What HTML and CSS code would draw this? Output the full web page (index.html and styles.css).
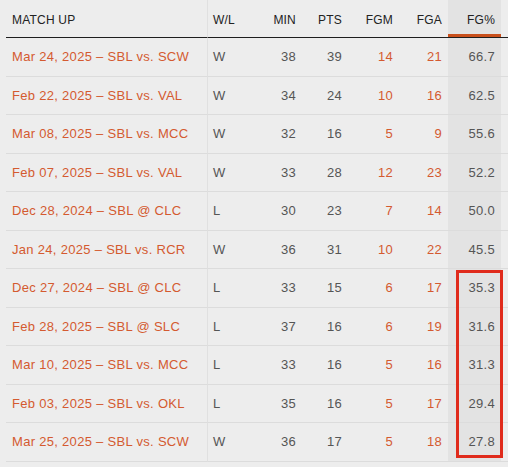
FILE: index.html
```html
<!DOCTYPE html>
<html>
<head>
<meta charset="utf-8">
<link rel="stylesheet" href="styles.css">
</head>
<body>
<div class="wrap">
<table class="stats">
<colgroup>
<col class="w-match"><col class="w-wl"><col class="w-min"><col class="w-pts"><col class="w-fgm"><col class="w-fga"><col class="w-fgp"><col class="w-pad">
</colgroup>
<thead>
<tr>
<th class="c-match">MATCH UP</th>
<th class="c-wl">W/L</th>
<th class="c-num">MIN</th>
<th class="c-num">PTS</th>
<th class="c-num">FGM</th>
<th class="c-num">FGA</th>
<th class="c-num c-fgp sorted">FG%</th>
<th class="c-pad"></th>
</tr>
</thead>
<tbody>
<tr><td class="c-match link">Mar 24, 2025 – SBL vs. SCW</td><td class="c-wl">W</td><td class="c-num">38</td><td class="c-num">39</td><td class="c-num link">14</td><td class="c-num link">21</td><td class="c-num c-fgp">66.7</td><td class="c-pad"></td></tr>
<tr><td class="c-match link">Feb 22, 2025 – SBL vs. VAL</td><td class="c-wl">W</td><td class="c-num">34</td><td class="c-num">24</td><td class="c-num link">10</td><td class="c-num link">16</td><td class="c-num c-fgp">62.5</td><td class="c-pad"></td></tr>
<tr><td class="c-match link">Mar 08, 2025 – SBL vs. MCC</td><td class="c-wl">W</td><td class="c-num">32</td><td class="c-num">16</td><td class="c-num link">5</td><td class="c-num link">9</td><td class="c-num c-fgp">55.6</td><td class="c-pad"></td></tr>
<tr><td class="c-match link">Feb 07, 2025 – SBL vs. VAL</td><td class="c-wl">W</td><td class="c-num">33</td><td class="c-num">28</td><td class="c-num link">12</td><td class="c-num link">23</td><td class="c-num c-fgp">52.2</td><td class="c-pad"></td></tr>
<tr><td class="c-match link">Dec 28, 2024 – SBL @ CLC</td><td class="c-wl">L</td><td class="c-num">30</td><td class="c-num">23</td><td class="c-num link">7</td><td class="c-num link">14</td><td class="c-num c-fgp">50.0</td><td class="c-pad"></td></tr>
<tr><td class="c-match link">Jan 24, 2025 – SBL vs. RCR</td><td class="c-wl">W</td><td class="c-num">36</td><td class="c-num">31</td><td class="c-num link">10</td><td class="c-num link">22</td><td class="c-num c-fgp">45.5</td><td class="c-pad"></td></tr>
<tr><td class="c-match link">Dec 27, 2024 – SBL @ CLC</td><td class="c-wl">L</td><td class="c-num">33</td><td class="c-num">15</td><td class="c-num link">6</td><td class="c-num link">17</td><td class="c-num c-fgp">35.3</td><td class="c-pad"></td></tr>
<tr><td class="c-match link">Feb 28, 2025 – SBL @ SLC</td><td class="c-wl">L</td><td class="c-num">37</td><td class="c-num">16</td><td class="c-num link">6</td><td class="c-num link">19</td><td class="c-num c-fgp">31.6</td><td class="c-pad"></td></tr>
<tr><td class="c-match link">Mar 10, 2025 – SBL vs. MCC</td><td class="c-wl">L</td><td class="c-num">33</td><td class="c-num">16</td><td class="c-num link">5</td><td class="c-num link">16</td><td class="c-num c-fgp">31.3</td><td class="c-pad"></td></tr>
<tr><td class="c-match link">Feb 03, 2025 – SBL vs. OKL</td><td class="c-wl">L</td><td class="c-num">35</td><td class="c-num">16</td><td class="c-num link">5</td><td class="c-num link">17</td><td class="c-num c-fgp">29.4</td><td class="c-pad"></td></tr>
<tr><td class="c-match link">Mar 25, 2025 – SBL vs. SCW</td><td class="c-wl">W</td><td class="c-num">36</td><td class="c-num">17</td><td class="c-num link">5</td><td class="c-num link">18</td><td class="c-num c-fgp">27.8</td><td class="c-pad"></td></tr>
</tbody>
</table>
<div class="highlight"></div>
</div>
</body>
</html>
```

FILE: styles.css
```css
html, body {
  margin: 0;
  padding: 0;
  background: #ededed;
}
body {
  font-family: "Liberation Sans", Arial, sans-serif;
  font-size: 13px;
  color: #555;
  overflow: hidden;
}
.wrap {
  position: relative;
  padding-left: 6px;
}
.stats {
  border-collapse: separate;
  border-spacing: 0;
  table-layout: fixed;
  width: 502px;
}
.w-match { width: 201px; }
.w-wl { width: 43px; }
.w-min { width: 52px; }
.w-pts { width: 46px; }
.w-fgm { width: 51px; }
.w-fga { width: 49px; }
.w-fgp { width: 53px; }
.w-pad { width: 7px; }
.stats th, .stats td {
  box-sizing: border-box;
  padding: 0;
  vertical-align: middle;
  white-space: nowrap;
}
.stats th {
  height: 38px;
  padding-top: 3px;
  font-size: 12px;
  font-weight: normal;
  color: #222;
  text-align: left;
  border-bottom: 1px solid #1e1e1e;
  letter-spacing: 0.2px;
}
.stats td {
  height: 38.5px;
  border-bottom: 1px solid #dcdcdc;
  letter-spacing: 0.3px;
}
.c-match { padding-left: 6px !important; }
.c-wl { padding-left: 5px !important; border-left: 1px solid #e0e0e0; }
.stats .c-num {
  text-align: right;
  padding-right: 6px;
}
.stats .c-fgp {
  background: #e3e3e3;
}
.stats th.sorted {
  box-shadow: inset 0 -3px 0 #c9501c;
}
.link {
  color: #d45a30;
}
.highlight {
  position: absolute;
  left: 456px;
  top: 270px;
  width: 41px;
  height: 182px;
  border: 3px solid #e02b1c;
}
```
